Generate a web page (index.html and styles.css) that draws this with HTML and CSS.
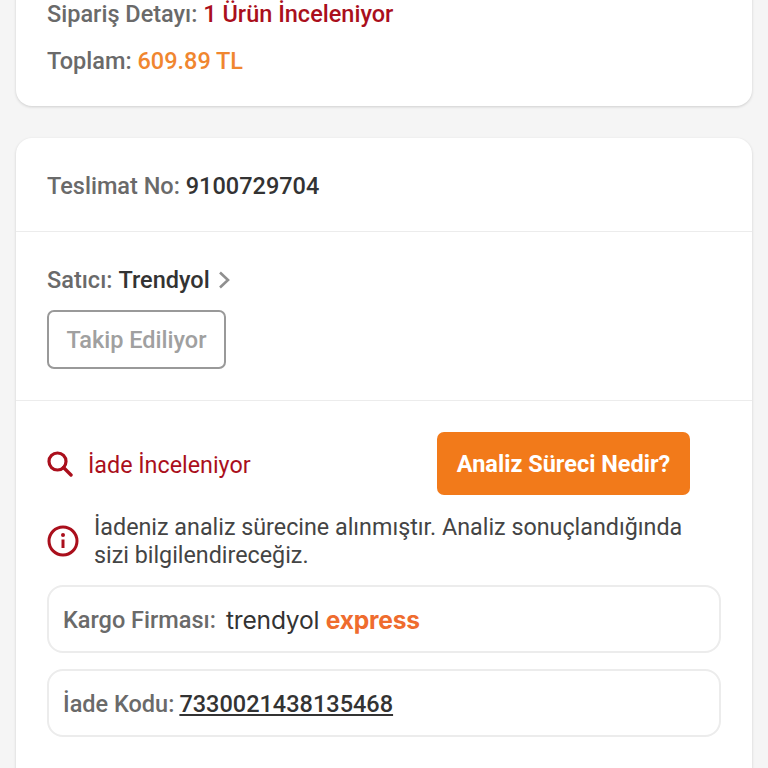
FILE: index.html
```html
<!DOCTYPE html>
<html lang="tr">
<head>
<meta charset="utf-8">
<title>Sipariş Detayı</title>
<link rel="stylesheet" href="styles.css">
</head>
<body>
<main class="page">
  <section class="card summary">
    <p class="row"><span class="label">Sipariş Detayı:</span> <span class="red">1 Ürün İnceleniyor</span></p>
    <p class="row"><span class="label">Toplam:</span> <span class="orange">609.89 TL</span></p>
  </section>

  <section class="card">
    <div class="block delivery">
      <p class="row"><span class="label">Teslimat No:</span> <span class="dark">9100729704</span></p>
    </div>
    <div class="block seller">
      <p class="row seller-row"><span class="label">Satıcı:</span> <span class="dark">Trendyol</span>
        <svg class="chevron" width="13" height="18" viewBox="0 0 13 18" aria-hidden="true"><path d="M2 1.500l8 7.500-8 7.500" fill="none" stroke="#8f8f8f" stroke-width="2.600"/></svg>
      </p>
      <button class="follow" type="button">Takip Ediliyor</button>
    </div>
    <div class="block status">
      <div class="status-head">
        <div class="status-title">
          <svg width="26" height="26" viewBox="0 0 26 26" aria-hidden="true"><circle cx="10.500" cy="10.500" r="8.500" fill="none" stroke="#aa0f1c" stroke-width="3.200"/><path d="M16.500 16.500l7.500 7.500" stroke="#aa0f1c" stroke-width="3.400" stroke-linecap="round"/></svg>
          <span>İade İnceleniyor</span>
        </div>
        <button class="cta" type="button">Analiz Süreci Nedir?</button>
      </div>
      <div class="notice">
        <svg class="info" width="32" height="32" viewBox="0 0 32 32" aria-hidden="true"><circle cx="16" cy="16" r="14" fill="none" stroke="#aa0f1c" stroke-width="3"/><circle cx="16" cy="10" r="2" fill="#aa0f1c"/><path d="M16 14.500v8.500" stroke="#aa0f1c" stroke-width="3"/></svg>
        <p>İadeniz analiz sürecine alınmıştır. Analiz sonuçlandığında<br>sizi bilgilendireceğiz.</p>
      </div>
      <div class="info-box">
        <span class="label">Kargo Firması:</span>
        <span class="brand"><span class="brand-name">trendyol</span> <span class="brand-sub">express</span></span>
      </div>
      <div class="info-box code-box">
        <span class="label">İade Kodu:</span>
        <a class="code" href="#">7330021438135468</a>
      </div>
    </div>
  </section>
</main>
</body>
</html>
```
FILE: styles.css
```css
html, body {
  margin: 0;
  height: 768px;
  overflow: hidden;
  background: #f5f5f5;
}

body {
  font-family: Roboto, "Noto Sans", sans-serif;
  font-size: 23.5px;
  font-weight: 500;
  color: #666;
}

p { margin: 0; }

/* The list is scrolled: the first card starts above the fold. */
.page {
  display: flex;
  flex-direction: column;
  gap: 32px;
  padding: 0 16px;
  margin-top: -20px;
}

.card {
  background: #fff;
  border-radius: 16px;
  box-shadow: 0 1px 3px rgba(0, 0, 0, 0.16);
}

.summary {
  display: flex;
  flex-direction: column;
  gap: 20px;
  height: 126px;
  padding: 18px 31px 0;
  box-sizing: border-box;
}

.row { line-height: 28px; }

.summary .row:first-child { padding-top: 2px; }
.summary .row + .row { margin-top: -1px; }

.label { color: #6a6a6a; }
.red { color: #aa0f1c; }
.orange { color: #f0862f; }
.dark { color: #333; }

.block {
  padding: 0 31px;
  border-bottom: 1px solid #ececec;
}

.delivery {
  padding-top: 34px;
  padding-bottom: 31px;
}

.seller {
  padding-top: 34px;
  padding-bottom: 31px;
}

.seller-row {
  display: flex;
  align-items: center;
  gap: 6px;
}

.chevron { margin-left: 2px; }

.follow {
  display: block;
  width: 179px;
  height: 59px;
  margin-top: 16px;
  background: #fff;
  border: 2px solid #999;
  border-radius: 7px;
  color: #a0a0a0;
  font: inherit;
  padding: 0;
}

.status {
  padding: 31px 31px 60px;
  border-bottom: 0;
}

.status-head {
  display: flex;
  align-items: center;
  justify-content: space-between;
  padding-right: 31px;
}

.status-title {
  display: flex;
  align-items: center;
  gap: 15px;
  color: #aa0f1c;
  font-size: 23.3px;
  font-weight: 400;
}

.status-title span { padding-top: 2px; }

.cta {
  width: 253px;
  height: 63px;
  background: #f27a1a;
  border: 0;
  border-radius: 7px;
  color: #fff;
  font: inherit;
  font-weight: 700;
  padding: 0;
}

.notice {
  display: flex;
  align-items: center;
  gap: 15px;
  margin-top: 18px;
  color: #444;
  font-size: 23.3px;
  font-weight: 400;
  line-height: 28px;
}

.info { flex: none; }

.info-box {
  display: flex;
  align-items: center;
  height: 68px;
  box-sizing: border-box;
  margin-top: 16px;
  padding: 2px 14px 0;
  border: 2px solid #ececec;
  border-radius: 16px;
}

.brand {
  margin-left: 10px;
  font-family: Inter, sans-serif;
  font-size: 24.6px;
  letter-spacing: -0.2px;
  white-space: nowrap;
}

.brand-name {
  color: #333;
  font-weight: 400;
}

.brand-sub {
  color: #ef6c2e;
  font-weight: 700;
}

.code-box .code {
  margin-left: 5px;
  color: #333;
  text-decoration: underline;
}
```
